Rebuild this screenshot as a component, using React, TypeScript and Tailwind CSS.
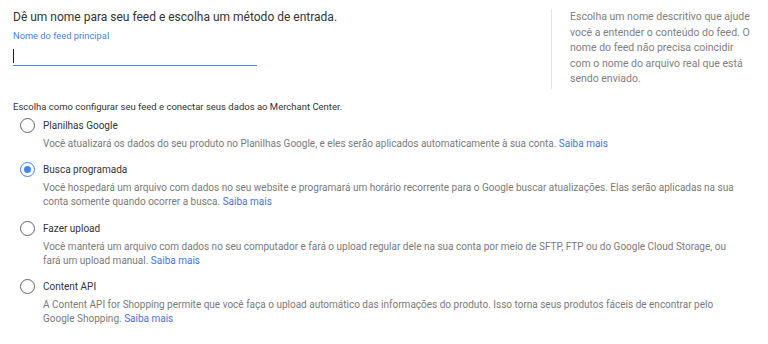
import React, { useState } from 'react';

const options = [
  {
    id: 'sheets',
    title: 'Planilhas Google',
    desc: 'Você atualizará os dados do seu produto no Planilhas Google, e eles serão aplicados automaticamente à sua conta.',
  },
  {
    id: 'fetch',
    title: 'Busca programada',
    desc: 'Você hospedará um arquivo com dados no seu website e programará um horário recorrente para o Google buscar atualizações. Elas serão aplicadas na sua conta somente quando ocorrer a busca.',
  },
  {
    id: 'upload',
    title: 'Fazer upload',
    desc: 'Você manterá um arquivo com dados no seu computador e fará o upload regular dele na sua conta por meio de SFTP, FTP ou do Google Cloud Storage, ou fará um upload manual.',
  },
  {
    id: 'api',
    title: 'Content API',
    desc: 'A Content API for Shopping permite que você faça o upload automático das informações do produto. Isso torna seus produtos fáceis de encontrar pelo Google Shopping.',
  },
];

function Radio({ checked }: { checked: boolean }) {
  return (
    <span
      className={`flex h-[15px] w-[15px] shrink-0 items-center justify-center rounded-full border-[1.5px] ${
        checked ? 'border-[#4285f4]' : 'border-[#5f6368]'
      }`}
    >
      {checked && <span className="h-[7px] w-[7px] rounded-full bg-[#4285f4]" />}
    </span>
  );
}

export default function App() {
  const [selected, setSelected] = useState('fetch');

  return (
    <div className="h-[344px] w-[768px] overflow-hidden bg-white font-['Roboto',sans-serif]">
      {/* Name section */}
      <div className="flex pt-[9px]">
        <div className="w-[538px] pl-[13px]">
          <h1 className="text-[12px] leading-[16px] text-[#333]">
            Dê um nome para seu feed e escolha um método de entrada.
          </h1>
          <label className="mt-[4px] block text-[9.3px] leading-[13px] text-[#4a80e8]">Nome do feed principal</label>
          <div className="mt-[4px] flex h-[20px] w-[244px] items-center border-b-[1.5px] border-[#4285f4]">
            <span className="h-[14px] w-px bg-[#222]" />
          </div>
        </div>
        <div className="ml-[13px] border-l border-[#e6e6e6] pl-[18px] pb-[2px]">
          <p className="w-[180px] text-[10.5px] leading-[15.5px] text-[#808080]">
            Escolha um nome descritivo que ajude você a entender o conteúdo do feed. O nome do feed não precisa coincidir com o nome do arquivo real que está sendo enviado.
          </p>
        </div>
      </div>

      {/* Input method */}
      <p className="mt-[11px] pl-[13px] text-[9.5px] leading-[14px] text-[#333]">
        Escolha como configurar seu feed e conectar seus dados ao Merchant Center.
      </p>
      <div className="mt-[5px] flex flex-col gap-[12.5px] pl-[20px]">
        {options.map((o) => (
          <div key={o.id} className="cursor-pointer" onClick={() => setSelected(o.id)}>
            <div className="flex h-[13px] items-center gap-[8px]">
              <Radio checked={selected === o.id} />
              <span className="text-[10px] leading-[13px] text-[#333]">{o.title}</span>
            </div>
            <p className="mt-[5px] w-[718px] pl-[23px] text-[10px] leading-[14px] text-[#7a7a7a]">
              {o.desc} <a className="text-[#4a72d8]">Saiba mais</a>
            </p>
          </div>
        ))}
      </div>
    </div>
  );
}
